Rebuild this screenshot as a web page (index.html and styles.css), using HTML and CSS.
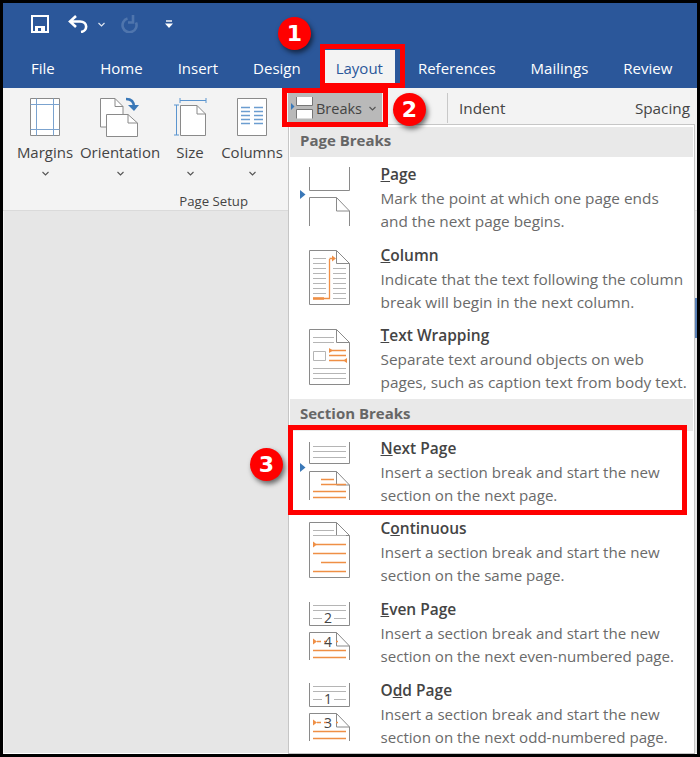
FILE: index.html
```html
<!DOCTYPE html>
<html lang="en">
<head>
<meta charset="utf-8">
<title>Word Layout Breaks</title>
<link rel="stylesheet" href="styles.css">
</head>
<body>
<div class="frame">
  <header class="titlebar">
    <div class="qat">
      <svg class="qat-save" width="18" height="18" viewBox="0 0 18 18"><path d="M1 1H17V17H1Z" fill="none" stroke="#fff" stroke-width="2"/><path d="M4 11H14V16H4Z" fill="#fff"/><path d="M7 13H10V16H7Z" fill="#2b579a"/></svg>
      <svg class="qat-undo" width="21" height="18" viewBox="0 0 21 18"><path d="M8 1 2 6.500 8 12M2 6.500H12C20 6.500 20 16 13 17" fill="none" stroke="#fff" stroke-width="2.600"/></svg>
      <svg class="chev qat-chev" width="7" height="5" viewBox="0 0 7 5"><path d="M.5 1 3.500 4 6.500 1" fill="none" stroke="#dfe6f1" stroke-width="1.200"/></svg>
      <svg class="qat-redo" width="18" height="18" viewBox="0 0 18 18"><path d="M12 0V7.500H7M6.500 3.500A7 7 0 1 0 15 7.500" fill="none" stroke="#4f75ad" stroke-width="2.600"/></svg>
      <svg class="qat-custom" width="8" height="9" viewBox="0 0 8 9"><path d="M1 1H7" stroke="#fff" stroke-width="1.400"/><path d="M0 3.500H8L4 8Z" fill="#fff"/></svg>
    </div>
    <nav class="tabs">
      <span class="tab tab-file">File</span>
      <span class="tab">Home</span>
      <span class="tab">Insert</span>
      <span class="tab">Design</span>
      <span class="tab tab-active">Layout</span>
      <span class="tab">References</span>
      <span class="tab">Mailings</span>
      <span class="tab">Review</span>
    </nav>
  </header>

  <section class="ribbon">
    <div class="group">
      <div class="tools">
        <div class="tool tool-margins">
          <svg width="32" height="40" viewBox="0 0 32 40"><path d="M1.500 1.500H30.500V38.500H1.500Z" fill="#fff" stroke="#8a8a8a"/><path d="M1.500 7.500H30.500M1.500 32.500H30.500M7.500 1.500V38.500M24.500 1.500V38.500" stroke="#7ba3cf" fill="none"/></svg>
          <span class="tool-label">Margins</span>
          <svg class="chev" width="7" height="5" viewBox="0 0 7 5"><path d="M.5 1 3.500 4 6.500 1" fill="none" stroke="#555" stroke-width="1.100"/></svg>
        </div>
        <div class="tool tool-orient">
          <svg width="42" height="40" viewBox="0 0 42 40"><path d="M1.500 1.500H16L24 9.500V30H1.500Z" fill="#fff" stroke="#8a8a8a"/><path d="M16 1.500V9.500H24" fill="none" stroke="#8a8a8a"/><path d="M7.500 17.500H29L38.500 26V39.500H7.500Z" fill="#fff" stroke="#8a8a8a"/><path d="M29 17.500V26H38.500" fill="none" stroke="#8a8a8a"/><path d="M27 2C33 2 35 5 35 10" fill="none" stroke="#3a78b8" stroke-width="2.500"/><path d="M29 8H40L35 14Z" fill="#3a78b8"/></svg>
          <span class="tool-label">Orientation</span>
          <svg class="chev" width="7" height="5" viewBox="0 0 7 5"><path d="M.5 1 3.500 4 6.500 1" fill="none" stroke="#555" stroke-width="1.100"/></svg>
        </div>
        <div class="tool tool-size">
          <svg width="34" height="40" viewBox="0 0 34 40"><path d="M7 3.500H33M7 1V6M33 1V6M3.500 8V38M1 8H6M1 38H6" fill="none" stroke="#5b95cf"/><path d="M7.500 8.500H24L32.500 17V38.500H7.500Z" fill="#fff" stroke="#8a8a8a"/><path d="M24 8.500V17H32.500" fill="none" stroke="#8a8a8a"/></svg>
          <span class="tool-label">Size</span>
          <svg class="chev" width="7" height="5" viewBox="0 0 7 5"><path d="M.5 1 3.500 4 6.500 1" fill="none" stroke="#555" stroke-width="1.100"/></svg>
        </div>
        <div class="tool tool-columns">
          <svg width="30" height="40" viewBox="0 0 30 40"><path d="M.5 1.500H29.500V38.500H.5Z" fill="#fff" stroke="#8a8a8a"/><path d="M4 10.500H13M17 10.500H26M4 14.500H13M17 14.500H26M4 18.500H13M17 18.500H26M4 22.500H13M17 22.500H26M4 26.500H13M17 26.500H26" stroke="#6b9dd0" stroke-width="1.300" fill="none"/></svg>
          <span class="tool-label">Columns</span>
          <svg class="chev" width="7" height="5" viewBox="0 0 7 5"><path d="M.5 1 3.500 4 6.500 1" fill="none" stroke="#555" stroke-width="1.100"/></svg>
        </div>
      </div>
      <div class="group-caption">Page Setup</div>
    </div>
    <div class="breaks-row">
      <div class="breaks-btn">
        <svg width="22" height="22" viewBox="0 0 22 22"><path d="M0 6 3.500 9.500 0 13Z" fill="#3a78b8"/><path d="M5.500 0V8.500H21.500V0" fill="#fff" stroke="#777"/><path d="M5.500 21.500V12.500H21.500V21.500" fill="#fff" stroke="#777"/></svg>
        <span class="breaks-text">Breaks</span>
        <svg class="chev" width="7" height="5" viewBox="0 0 7 5"><path d="M.5 1 3.500 4 6.500 1" fill="none" stroke="#555" stroke-width="1.100"/></svg>
      </div>
      <div class="sep"></div>
      <span class="para-label para-indent">Indent</span>
      <span class="para-label para-spacing">Spacing</span>
    </div>
  </section>

  <main class="workspace"></main>

  <aside class="menu">
    <div class="menu-head">Page Breaks</div>

    <div class="item">
      <svg class="glyph" width="56" height="72" viewBox="0 0 56 72"><path class="tri" d="M0 33 5.500 37.500 0 42Z"/><path class="ln" d="M9.500 10V33.500H49.500V10"/><path class="ln" d="M9.500 69V40.500H36.500L49.500 54V69M36.500 40.500V54H49.500"/></svg>
      <div class="item-text">
        <div class="item-title"><u>P</u>age</div>
        <p class="item-desc">Mark the point at which one page ends<br>and the next page begins.</p>
      </div>
    </div>

    <div class="item">
      <svg class="glyph" width="56" height="72" viewBox="0 0 56 72"><path class="ln pg" d="M9.500 12.500H36.500L49.500 25.500V66.500H9.500Z"/><path class="ln" d="M36.500 12.500V25.500H49.500"/><path class="gl" d="M13 20.500H26M13 25.500H26M13 30.500H26M13 35.500H26M13 40.500H26M13 45.500H26M13 50.500H26M13 55.500H26M33 30.500H46M33 35.500H46M33 40.500H46M33 45.500H46M33 50.500H46M33 55.500H46M33 60.500H46"/><path class="or" d="M29.500 21V60.500H13M29.500 20.500H33"/><path class="or thick" d="M13 60.500H24"/><path class="orf" d="M32 17.500 36 20.500 32 23.500Z"/></svg>
      <div class="item-text">
        <div class="item-title"><u>C</u>olumn</div>
        <p class="item-desc">Indicate that the text following the column<br>break will begin in the next column.</p>
      </div>
    </div>

    <div class="item">
      <svg class="glyph" width="56" height="72" viewBox="0 0 56 72"><path class="ln pg" d="M9.500 11.500H36.500L49.500 24.500V66.500H9.500Z"/><path class="ln" d="M36.500 11.500V24.500H49.500"/><path class="gl" d="M13 19.500H34M13 24.500H34M13 50.500H46M13 55.500H46M13 60.500H46"/><path class="gl" d="M13.500 33.500H25.500V42.500H13.500Z"/><path class="or" d="M31 32.500H46M29 37.500H46M29 42.500H44"/><path class="orf" d="M29 30 33 32.500 29 35ZM47 40 43 42.500 47 45Z"/></svg>
      <div class="item-text">
        <div class="item-title"><u>T</u>ext Wrapping</div>
        <p class="item-desc">Separate text around objects on web<br>pages, such as caption text from body text.</p>
      </div>
    </div>

    <div class="menu-head menu-head-2">Section Breaks</div>

    <div class="item">
      <svg class="glyph" width="56" height="72" viewBox="0 0 56 72"><path class="tri" d="M0 32 5.500 36.500 0 41Z"/><path class="ln" d="M9.500 11V32.500H49.500V11"/><path class="gl" d="M13 15.500H46M13 20.500H46M13 26.500H46"/><path class="ln" d="M9.500 69V40.500H36.500L49.500 54V69M36.500 40.500V54H49.500"/><path class="or" d="M21 48.500H34M21 53.500H46M13 60.500H46M13 66.500H46"/></svg>
      <div class="item-text">
        <div class="item-title"><u>N</u>ext Page</div>
        <p class="item-desc item-desc-tight">Insert a section break and start the new<br>section on the next page.</p>
      </div>
    </div>

    <div class="item">
      <svg class="glyph" width="56" height="72" viewBox="0 0 56 72"><path class="ln pg" d="M9.500 11.500H36.500L49.500 24.500V66.500H9.500Z"/><path class="ln" d="M36.500 11.500V24.500H49.500"/><path class="gl" d="M13 19.500H34M13 24.500H46"/><path class="or" d="M16 33.500H46M13 42.500H46M21 51.500H46M13 60.500H46"/><path class="orf" d="M13 30.500 17 33.500 13 36.500Z"/></svg>
      <div class="item-text">
        <div class="item-title">C<u>o</u>ntinuous</div>
        <p class="item-desc item-desc-tight">Insert a section break and start the new<br>section on the same page.</p>
      </div>
    </div>

    <div class="item">
      <svg class="glyph" width="56" height="72" viewBox="0 0 56 72"><path class="ln" d="M9.500 10V33.500H49.500V10"/><path class="gl" d="M13 13.500H46M13 18.500H46M13 26.500H22M34 26.500H46"/><text class="num" x="28" y="31">2</text><path class="ln" d="M9.500 68V40.500H36.500L49.500 54V68M36.500 40.500V54H49.500"/><path class="or" d="M17 49.500H21M24 49.500H27M36 49.500H38M13 58.500H46M13 65.500H46"/><path class="orf" d="M13 46.500 17 49.500 13 52.500Z"/><text class="num" x="28" y="55">4</text></svg>
      <div class="item-text">
        <div class="item-title"><u>E</u>ven Page</div>
        <p class="item-desc item-desc-tight">Insert a section break and start the new<br>section on the next even-numbered page.</p>
      </div>
    </div>

    <div class="item">
      <svg class="glyph" width="56" height="72" viewBox="0 0 56 72"><path class="ln" d="M9.500 10V33.500H49.500V10"/><path class="gl" d="M13 13.500H46M13 18.500H46M13 26.500H22M34 26.500H46"/><text class="num" x="28" y="31">1</text><path class="ln" d="M9.500 68V40.500H36.500L49.500 54V68M36.500 40.500V54H49.500"/><path class="or" d="M17 49.500H21M24 49.500H27M36 49.500H38M13 58.500H46M13 65.500H46"/><path class="orf" d="M13 46.500 17 49.500 13 52.500Z"/><text class="num" x="28" y="55">3</text></svg>
      <div class="item-text">
        <div class="item-title">O<u>d</u>d Page</div>
        <p class="item-desc item-desc-tight">Insert a section break and start the new<br>section on the next odd-numbered page.</p>
      </div>
    </div>
  </aside>

  <div class="scroll-thumb"></div>
  <div class="mark mark-layout"></div>
  <div class="mark mark-breaks"></div>
  <div class="mark mark-next"></div>
  <div class="badge badge-1">1</div>
  <div class="badge badge-2">2</div>
  <div class="badge badge-3">3</div>
</div>
</body>
</html>
```

FILE: styles.css
```css
* { box-sizing: border-box; }
html, body { margin: 0; padding: 0; }
body { font-family: "Open Sans", "Noto Sans", "Liberation Sans", sans-serif; background: #000; }

.frame {
  position: relative;
  width: 700px;
  height: 757px;
  border: 3px solid #000;
  display: flex;
  flex-direction: column;
  overflow: hidden;
  background: #e6e6e6;
}

.titlebar { height: 85px; background: #2b579a; flex: none; display: flex; flex-direction: column; }
.qat { height: 47px; display: flex; align-items: center; padding-left: 28px; padding-bottom: 5px; flex: none; }
.qat-undo { margin-left: 19px; }
.qat-chev { margin-left: 9px; }
.qat-redo { margin-left: 16px; }
.qat-custom { margin-left: 26px; }

.tabs { display: flex; height: 38px; padding: 0 0 2px 28px; color: #fff; font-size: 15px; }
.tab { display: flex; align-items: center; padding: 0 17.500px; white-space: nowrap; }
.tab-file { padding: 0; margin-right: 28px; }
.tab-active { color: #2b579a; background: #f3f3f3; padding: 0 12px; margin: 0 5.500px; }

.ribbon { height: 123px; background: #f3f3f3; flex: none; display: flex; border-bottom: 1px solid #dadada; }
.group { width: 285px; display: flex; flex-direction: column; flex: none; }
.tools { display: flex; height: 104px; padding-top: 9px; flex: none; }
.tool { display: flex; flex-direction: column; align-items: center; flex: none; color: #444; font-size: 15px; }
.tool-margins { width: 84px; }
.tool-orient { width: 66px; }
.tool-size { width: 74px; }
.tool-columns { width: 50px; }
.tool-label { margin-top: 4px; line-height: 22px; white-space: nowrap; }
.tool .chev { margin-top: 8px; }
.group-caption { text-align: right; padding-right: 40px; font-size: 13.200px; color: #444; line-height: 18px; }

.breaks-row { flex: 1; display: flex; align-items: flex-start; padding: 5px 7px 0 0; color: #444; font-size: 15.300px; }
.breaks-btn { display: flex; align-items: center; width: 94px; height: 30px; background: #b9b9b9; padding-left: 3px; gap: 3px; }
.breaks-text { font-size: 14.500px; }
.breaks-btn .chev { margin-left: 4px; }
.sep { width: 1px; height: 30px; background: #c8c8c8; margin-left: 65px; }
.para-label { line-height: 30px; }
.para-indent { margin-left: 11px; }
.para-spacing { margin-left: auto; }

.workspace { flex: 1; background: #e6e6e6; border-bottom: 1px solid #fff; border-left: 1px solid #f4f4f4; }

.menu {
  position: absolute;
  left: 285px;
  top: 121px;
  width: 407px;
  height: 630px;
  background: #fff;
  border: 1px solid #c6c6c6;
  padding: 2px 1px 0;
}
.menu-head { height: 30px; background: #e9e9e9; font-weight: 700; font-size: 15px; line-height: 26px; color: #666; padding-left: 10px; }
.menu-head-2 { height: 32px; line-height: 28px; }

.item { height: 80.600px; display: flex; padding-left: 10px; }
.glyph { flex: none; }
.item-text { padding-left: 24.500px; padding-top: 5px; }
.item-title { font-size: 15.500px; font-weight: 600; line-height: 25px; color: #444; }
.item-desc { margin: 0; font-size: 15.350px; line-height: 23px; color: #6a6a6a; white-space: nowrap; }
.item-desc-tight { font-size: 15.100px; }

.tri { fill: #3a78b8; }
.ln { fill: none; stroke: #8a8a8a; stroke-width: 1; }
.pg { fill: #fff; }
.gl { fill: none; stroke: #b5b5b5; stroke-width: 1; }
.or { fill: none; stroke: #ef8f45; stroke-width: 1.300; }
.thick { stroke-width: 2.500; }
.orf { fill: #ef8f45; }
.num { font-family: "Open Sans", sans-serif; font-size: 14px; fill: #444; text-anchor: middle; }

.scroll-thumb { position: absolute; left: 692px; top: 295px; width: 2px; height: 40px; background: #5b82b8; }

.mark { position: absolute; border: 5px solid #f00; }
.mark-layout { left: 317px; top: 41px; width: 85px; height: 44px; }
.mark-breaks { left: 279px; top: 85px; width: 106px; height: 39px; }
.mark-next { left: 285px; top: 422px; width: 399px; height: 90px; }

.badge {
  position: absolute;
  width: 33px;
  height: 33px;
  border-radius: 50%;
  background: #f00;
  color: #fff;
  font-family: "DejaVu Sans", sans-serif;
  font-weight: 700;
  font-size: 22px;
  line-height: 33px;
  text-align: center;
  box-shadow: 2px 3px 5px rgba(0,0,0,.55);
}
.badge-1 { left: 275px; top: 14px; }
.badge-2 { left: 390px; top: 90px; }
.badge-3 { left: 247px; top: 445px; }
```
